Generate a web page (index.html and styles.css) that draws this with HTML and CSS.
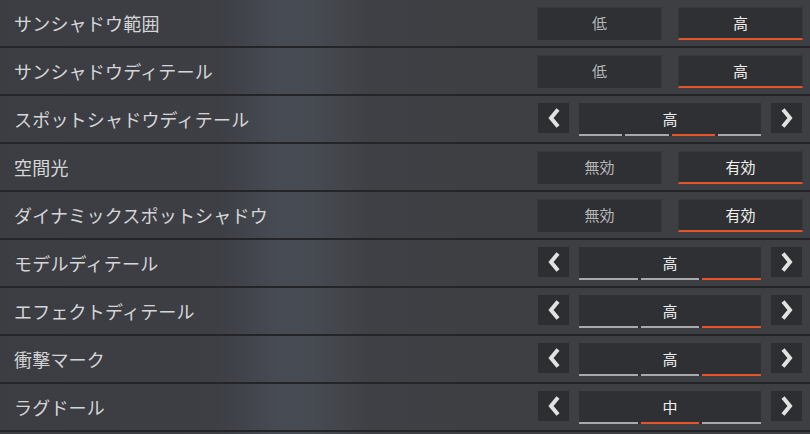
FILE: index.html
```html
<!DOCTYPE html>
<html lang="ja">
<head>
    <meta charset="UTF-8">
    <title>グラフィック設定</title>
    <link rel="stylesheet" href="styles.css">
</head>
<body>

<div class="settings">
    <div class="row">
        <span class="label">サンシャドウ範囲</span>
        <div class="toggle">
            <div class="opt">低</div>
            <div class="opt on">高</div>
        </div>
    </div>
    <div class="row">
        <span class="label">サンシャドウディテール</span>
        <div class="toggle">
            <div class="opt">低</div>
            <div class="opt on">高</div>
        </div>
    </div>
    <div class="row">
        <span class="label">スポットシャドウディテール</span>
        <div class="stepper">
            <div class="arrow"><svg width="14" height="22" viewBox="0 0 14 22"><polyline points="11,2.5 4,11 11,19.5" /></svg></div>
            <div class="value">
                <span class="val-text">高</span>
                <div class="segs"><i></i><i></i><i class="on"></i><i></i></div>
            </div>
            <div class="arrow"><svg width="14" height="22" viewBox="0 0 14 22"><polyline points="3,2.5 10,11 3,19.5" /></svg></div>
        </div>
    </div>
    <div class="row">
        <span class="label">空間光</span>
        <div class="toggle">
            <div class="opt">無効</div>
            <div class="opt on">有効</div>
        </div>
    </div>
    <div class="row">
        <span class="label">ダイナミックスポットシャドウ</span>
        <div class="toggle">
            <div class="opt">無効</div>
            <div class="opt on">有効</div>
        </div>
    </div>
    <div class="row">
        <span class="label">モデルディテール</span>
        <div class="stepper">
            <div class="arrow"><svg width="14" height="22" viewBox="0 0 14 22"><polyline points="11,2.5 4,11 11,19.5" /></svg></div>
            <div class="value">
                <span class="val-text">高</span>
                <div class="segs"><i></i><i></i><i class="on"></i></div>
            </div>
            <div class="arrow"><svg width="14" height="22" viewBox="0 0 14 22"><polyline points="3,2.5 10,11 3,19.5" /></svg></div>
        </div>
    </div>
    <div class="row">
        <span class="label">エフェクトディテール</span>
        <div class="stepper">
            <div class="arrow"><svg width="14" height="22" viewBox="0 0 14 22"><polyline points="11,2.5 4,11 11,19.5" /></svg></div>
            <div class="value">
                <span class="val-text">高</span>
                <div class="segs"><i></i><i></i><i class="on"></i></div>
            </div>
            <div class="arrow"><svg width="14" height="22" viewBox="0 0 14 22"><polyline points="3,2.5 10,11 3,19.5" /></svg></div>
        </div>
    </div>
    <div class="row">
        <span class="label">衝撃マーク</span>
        <div class="stepper">
            <div class="arrow"><svg width="14" height="22" viewBox="0 0 14 22"><polyline points="11,2.5 4,11 11,19.5" /></svg></div>
            <div class="value">
                <span class="val-text">高</span>
                <div class="segs"><i></i><i></i><i class="on"></i></div>
            </div>
            <div class="arrow"><svg width="14" height="22" viewBox="0 0 14 22"><polyline points="3,2.5 10,11 3,19.5" /></svg></div>
        </div>
    </div>
    <div class="row">
        <span class="label">ラグドール</span>
        <div class="stepper">
            <div class="arrow"><svg width="14" height="22" viewBox="0 0 14 22"><polyline points="11,2.5 4,11 11,19.5" /></svg></div>
            <div class="value">
                <span class="val-text">中</span>
                <div class="segs"><i></i><i class="on"></i><i></i></div>
            </div>
            <div class="arrow"><svg width="14" height="22" viewBox="0 0 14 22"><polyline points="3,2.5 10,11 3,19.5" /></svg></div>
        </div>
    </div>
</div>

</body>
</html>
```

FILE: styles.css
```css
body {
    margin: 0;
    padding: 0;
    width: 810px;
    height: 434px;
    overflow: hidden;
    font-family: "Noto Sans CJK JP", "Noto Sans", sans-serif;
    background-color: #3e3f43;
    background-image: linear-gradient(to right, #3b3d43 0px, #3d3f45 220px, #474b53 280px, #464a51 315px, #3f4045 370px, #3e3f43 480px);
}

.settings {
    display: flex;
    flex-direction: column;
}

.row {
    display: flex;
    align-items: center;
    height: 46px;
    border-bottom: 2px solid #252528;
    padding-left: 14px;
}

.label {
    flex: 1;
    font-size: 18px;
    color: #d6d6d8;
    letter-spacing: 0.2px;
}

.toggle {
    display: flex;
    gap: 16px;
    margin-right: 7px;
}

.opt {
    width: 123px;
    height: 30px;
    display: flex;
    align-items: center;
    justify-content: center;
    background-color: #2f3033;
    border: 1px solid #38393d;
    border-bottom: 2px solid transparent;
    color: #b8b8ba;
    font-size: 15px;
}

.opt.on {
    color: #f2f2f2;
    border-bottom-color: #e4532b;
}

.stepper {
    display: flex;
    align-items: flex-start;
    gap: 10px;
    margin-right: 8px;
}

.arrow {
    width: 31px;
    height: 30px;
    display: flex;
    align-items: center;
    justify-content: center;
    background-color: #2d2e31;
}

.arrow svg polyline {
    fill: none;
    stroke: #e2e2e2;
    stroke-width: 4;
    stroke-linecap: butt;
    stroke-linejoin: miter;
}

.value {
    width: 182px;
    height: 33px;
    display: flex;
    flex-direction: column;
    background-color: #2f3033;
}

.val-text {
    flex: 1;
    display: flex;
    align-items: center;
    justify-content: center;
    color: #f0f0f0;
    font-size: 15px;
}

.segs {
    display: flex;
    gap: 3px;
    height: 2px;
}

.segs i {
    flex: 1;
    background-color: #a9a9ab;
}

.segs i.on {
    background-color: #e4532b;
}
```
